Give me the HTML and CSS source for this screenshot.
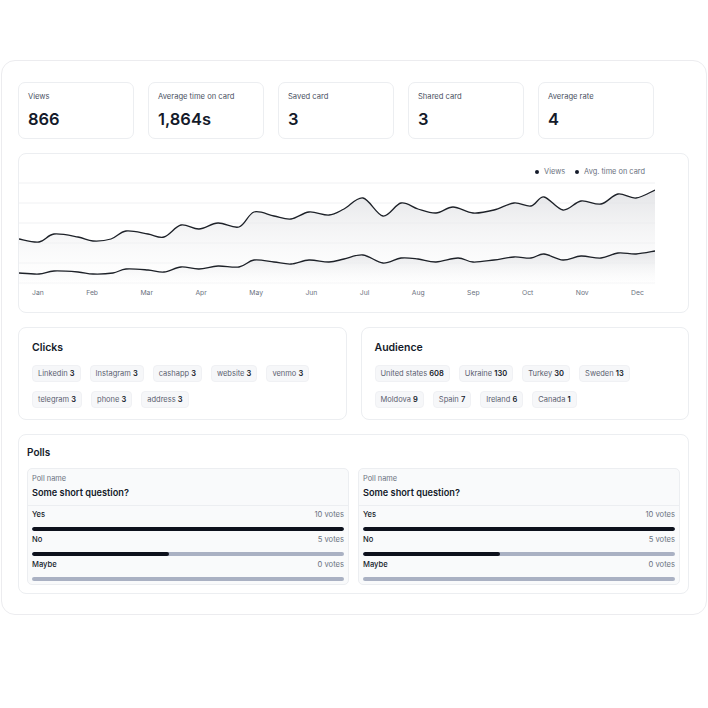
FILE: index.html
```html
<!DOCTYPE html>
<html lang="en">
  <head>
    <meta charset="UTF-8" />
    <meta name="viewport" content="width=device-width, initial-scale=1.0" />
    <title>Card analytics</title>
    <link rel="stylesheet" href="styles.css">
  </head>
  <body>
    <div class="dashboard">
      <!-- Top stats -->
      <div class="stats">
        <div class="stat-card">
          <p class="stat-label">Views</p>
          <p class="stat-value">866</p>
        </div>
        <div class="stat-card">
          <p class="stat-label">Average time on card</p>
          <p class="stat-value">1,864s</p>
        </div>
        <div class="stat-card">
          <p class="stat-label">Saved card</p>
          <p class="stat-value">3</p>
        </div>
        <div class="stat-card">
          <p class="stat-label">Shared card</p>
          <p class="stat-value">3</p>
        </div>
        <div class="stat-card">
          <p class="stat-label">Average rate</p>
          <p class="stat-value">4</p>
        </div>
      </div>

      <!-- Chart -->
      <div class="chart-card">
        <div class="chart-legend">
          <span class="legend-item"><i class="legend-dot"></i>Views</span>
          <span class="legend-item"><i class="legend-dot"></i>Avg. time on card</span>
        </div>
        <svg class="chart" width="636" height="106" viewBox="0 0 636 106">
          <defs>
            <linearGradient id="area-fill" x1="0" y1="0" x2="0" y2="1">
              <stop offset="0" stop-color="#dfe0e3" stop-opacity="0.85" />
              <stop offset="1" stop-color="#ffffff" stop-opacity="0.2" />
            </linearGradient>
          </defs>
          <g class="grid">
            <line x1="0" y1="3" x2="636" y2="3" />
            <line x1="0" y1="23" x2="636" y2="23" />
            <line x1="0" y1="43" x2="636" y2="43" />
            <line x1="0" y1="63" x2="636" y2="63" />
            <line x1="0" y1="83" x2="636" y2="83" />
            <line x1="0" y1="103" x2="636" y2="103" />
          </g>
          <path id="views-area" class="area" d="" />
          <path id="time-area" class="area" d="" />
          <path id="views-line" class="line" d="" />
          <path id="time-line" class="line" d="" />
        </svg>
        <div class="chart-months">
          <span>Jan</span><span>Feb</span><span>Mar</span><span>Apr</span>
          <span>May</span><span>Jun</span><span>Jul</span><span>Aug</span>
          <span>Sep</span><span>Oct</span><span>Nov</span><span>Dec</span>
        </div>
      </div>

      <!-- Clicks and audience -->
      <div class="panels">
        <div class="panel">
          <h3 class="panel-title">Clicks</h3>
          <div class="tags">
            <span class="tag">Linkedin <b>3</b></span>
            <span class="tag">Instagram <b>3</b></span>
            <span class="tag">cashapp <b>3</b></span>
            <span class="tag">website <b>3</b></span>
            <span class="tag">venmo <b>3</b></span>
            <span class="tag">telegram <b>3</b></span>
            <span class="tag">phone <b>3</b></span>
            <span class="tag">address <b>3</b></span>
          </div>
        </div>
        <div class="panel">
          <h3 class="panel-title">Audience</h3>
          <div class="tags">
            <span class="tag">United states <b>608</b></span>
            <span class="tag">Ukraine <b>130</b></span>
            <span class="tag">Turkey <b>30</b></span>
            <span class="tag">Sweden <b>13</b></span>
            <span class="tag">Moldova <b>9</b></span>
            <span class="tag">Spain <b>7</b></span>
            <span class="tag">Ireland <b>6</b></span>
            <span class="tag">Canada <b>1</b></span>
          </div>
        </div>
      </div>

      <!-- Polls -->
      <div class="polls-card">
        <h3 class="polls-title">Polls</h3>
        <div class="polls">
          <div class="poll">
            <div class="poll-head">
              <p class="poll-name">Poll name</p>
              <p class="poll-question">Some short question?</p>
            </div>
            <div class="poll-options">
              <div class="poll-option">
                <div class="option-row"><span>Yes</span><span class="votes">10 votes</span></div>
                <div class="bar"><div class="bar-fill" style="width: 100%"></div></div>
              </div>
              <div class="poll-option">
                <div class="option-row"><span>No</span><span class="votes">5 votes</span></div>
                <div class="bar"><div class="bar-fill" style="width: 44%"></div></div>
              </div>
              <div class="poll-option">
                <div class="option-row"><span>Maybe</span><span class="votes">0 votes</span></div>
                <div class="bar"><div class="bar-fill" style="width: 0%"></div></div>
              </div>
            </div>
          </div>
          <div class="poll">
            <div class="poll-head">
              <p class="poll-name">Poll name</p>
              <p class="poll-question">Some short question?</p>
            </div>
            <div class="poll-options">
              <div class="poll-option">
                <div class="option-row"><span>Yes</span><span class="votes">10 votes</span></div>
                <div class="bar"><div class="bar-fill" style="width: 100%"></div></div>
              </div>
              <div class="poll-option">
                <div class="option-row"><span>No</span><span class="votes">5 votes</span></div>
                <div class="bar"><div class="bar-fill" style="width: 44%"></div></div>
              </div>
              <div class="poll-option">
                <div class="option-row"><span>Maybe</span><span class="votes">0 votes</span></div>
                <div class="bar"><div class="bar-fill" style="width: 0%"></div></div>
              </div>
            </div>
          </div>
        </div>
      </div>
    </div>

    <script>
      // Data points in chart coordinates (x, y)
      const viewsData = [
        [0, 59], [20, 62], [35, 54], [59, 57], [74, 61], [92, 59], [107, 51],
        [129, 54], [145, 57], [162, 45], [180, 49], [199, 43], [220, 47],
        [235, 32], [255, 36], [272, 39], [290, 32], [310, 35], [325, 29],
        [344, 18], [364, 36], [382, 23], [399, 29], [417, 33], [434, 27],
        [454, 33], [475, 30], [495, 23], [512, 26], [525, 17], [544, 30],
        [562, 21], [582, 24], [599, 14], [617, 18], [636, 10]
      ];
      const timeData = [
        [0, 93], [20, 94], [35, 91], [59, 92], [74, 94], [94, 93], [107, 89],
        [129, 90], [145, 92], [162, 87], [180, 89], [199, 86], [220, 87],
        [235, 80], [255, 82], [272, 84], [290, 80], [310, 82], [325, 79],
        [344, 75], [364, 83], [382, 78], [399, 79], [417, 82], [439, 78],
        [454, 82], [475, 80], [495, 77], [512, 78], [525, 74], [544, 80],
        [562, 76], [582, 78], [599, 73], [617, 74], [636, 71]
      ];

      // Smooth curve through the points (catmull-rom to bezier)
      function smoothPath(pts) {
        let d = `M${pts[0][0]},${pts[0][1]}`;
        for (let i = 0; i < pts.length - 1; i++) {
          const p0 = pts[i - 1] || pts[i];
          const p1 = pts[i];
          const p2 = pts[i + 1];
          const p3 = pts[i + 2] || p2;
          const c1x = p1[0] + (p2[0] - p0[0]) / 6;
          const c1y = p1[1] + (p2[1] - p0[1]) / 6;
          const c2x = p2[0] - (p3[0] - p1[0]) / 6;
          const c2y = p2[1] - (p3[1] - p1[1]) / 6;
          d += ` C${c1x.toFixed(1)},${c1y.toFixed(1)} ${c2x.toFixed(1)},${c2y.toFixed(1)} ${p2[0]},${p2[1]}`;
        }
        return d;
      }

      function drawSeries(data, lineId, areaId) {
        const line = smoothPath(data);
        document.getElementById(lineId).setAttribute("d", line);
        document.getElementById(areaId).setAttribute("d", line + " L636,106 L0,106 Z");
      }

      drawSeries(viewsData, "views-line", "views-area");
      drawSeries(timeData, "time-line", "time-area");
    </script>
  </body>
</html>
```

FILE: styles.css
```css
* {
  box-sizing: border-box;
  margin: 0;
  padding: 0;
  font-family: Inter, "Noto Sans", sans-serif;
}

body {
  background-color: #fff;
  color: #111827;
}

.dashboard {
  width: 706px;
  height: 555px;
  margin: 60px 0 0 1px;
  padding: 21px 17px 20px 16px;
  border: 1px solid #ececef;
  border-radius: 14px;
  display: flex;
  flex-direction: column;
  gap: 14px;
}

/* Stats */
.stats {
  display: flex;
  gap: 14px;
}

.stat-card {
  width: 116px;
  height: 57px;
  padding: 9px;
  border: 1px solid #eceef1;
  border-radius: 7px;
}

.stat-label {
  font-size: 7.6px;
  line-height: 10px;
  color: #4b5263;
  margin-bottom: 6px;
}

.stat-value {
  font-size: 16.5px;
  line-height: 22px;
  font-weight: 600;
  color: #141a2a;
}

/* Chart */
.chart-card {
  height: 160px;
  border: 1px solid #eceef1;
  border-radius: 8px;
  padding-top: 13px;
}

.chart-legend {
  display: flex;
  justify-content: flex-end;
  gap: 10px;
  padding-right: 43px;
  height: 10px;
  margin-bottom: 3px;
}

.legend-item {
  display: flex;
  align-items: center;
  font-size: 7.4px;
  line-height: 10px;
  color: #6b7280;
}

.legend-dot {
  width: 4px;
  height: 4px;
  border-radius: 50%;
  background-color: #141a2a;
  margin-right: 5px;
}

.chart {
  display: block;
}

.grid line {
  stroke: #f0f1f3;
  stroke-width: 1;
}

.area {
  fill: url(#area-fill);
}

.line {
  fill: none;
  stroke: #1d2128;
  stroke-width: 1.3;
}

.chart-months {
  width: 636px;
  display: flex;
  justify-content: space-between;
  padding: 0 11px 0 13px;
  margin-top: 2px;
  font-size: 6.8px;
  line-height: 10px;
  color: #6b7280;
}

/* Clicks and audience */
.panels {
  display: grid;
  grid-template-columns: 1fr 1fr;
  gap: 14px;
}

.panel {
  height: 93px;
  padding: 13px 13px;
  border: 1px solid #eceef1;
  border-radius: 8px;
}

.panel-title {
  font-size: 10.5px;
  line-height: 14px;
  font-weight: 600;
  color: #141a2a;
  margin-bottom: 10px;
}

.tags {
  display: flex;
  flex-wrap: wrap;
  gap: 9px;
}

.tag {
  height: 17px;
  padding: 0 5px;
  background-color: #f6f7f9;
  border: 1px solid #f0f1f4;
  border-radius: 4px;
  font-size: 7.5px;
  line-height: 15px;
  color: #5b6170;
}

.tag b {
  font-weight: 600;
  color: #141a2a;
}

/* Polls */
.polls-card {
  height: 160px;
  padding: 10px 8px 8px;
  border: 1px solid #eceef1;
  border-radius: 8px;
}

.polls-title {
  font-size: 10px;
  line-height: 14px;
  font-weight: 600;
  color: #141a2a;
  margin-bottom: 9px;
}

.polls {
  display: grid;
  grid-template-columns: 1fr 1fr;
  gap: 9px;
}

.poll {
  height: 117px;
  background-color: #f9fafb;
  border: 1px solid #eceef1;
  border-radius: 5px;
}

.poll-head {
  padding: 5px 4px 6px;
  border-bottom: 1px solid #eceef1;
}

.poll-name {
  font-size: 7.4px;
  line-height: 10px;
  color: #6b7280;
  margin-bottom: 3px;
}

.poll-question {
  font-size: 9.2px;
  line-height: 12px;
  font-weight: 600;
  color: #141a2a;
}

.poll-options {
  padding: 4px 4px 5px;
}

.poll-option + .poll-option {
  margin-top: 4px;
}

.option-row {
  display: flex;
  justify-content: space-between;
  font-size: 7.6px;
  line-height: 10px;
  font-weight: 500;
  color: #141a2a;
  margin-bottom: 7px;
}

.option-row .votes {
  font-weight: 400;
  color: #6b7280;
}

.bar {
  height: 4px;
  border-radius: 2px;
  background-color: #aab1c3;
  overflow: hidden;
}

.bar-fill {
  height: 100%;
  border-radius: 2px;
  background-color: #0d111c;
}
```
